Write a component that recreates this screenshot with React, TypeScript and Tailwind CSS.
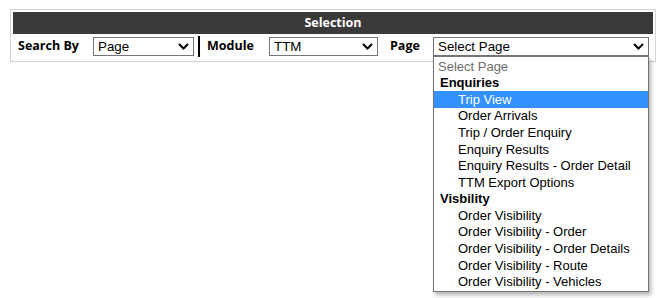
import React from "react";

const Chevron = () => (
  <svg width="11" height="7" viewBox="0 0 11 7" className="shrink-0">
    <path d="M1 1 L5.5 5.5 L10 1" fill="none" stroke="#000" strokeWidth="2" />
  </svg>
);

const Select = ({ value, width }: { value: string; width: string }) => (
  <div
    className={`${width} h-[19px] border border-[#767676] bg-white flex items-center justify-between pl-[4px] pr-[4px] text-[13.33px] leading-none text-black`}
    style={{ fontFamily: '"Liberation Sans", Arial, sans-serif' }}
  >
    <span>{value}</span>
    <Chevron />
  </div>
);

const groups: { label: string; items: string[] }[] = [
  {
    label: "Enquiries",
    items: [
      "Trip View",
      "Order Arrivals",
      "Trip / Order Enquiry",
      "Enquiry Results",
      "Enquiry Results - Order Detail",
      "TTM Export Options",
    ],
  },
  {
    label: "Visbility",
    items: [
      "Order Visibility",
      "Order Visibility - Order",
      "Order Visibility - Order Details",
      "Order Visibility - Route",
      "Order Visibility - Vehicles",
    ],
  },
];

export default function App() {
  const label = "font-bold text-[12.5px] text-black";
  return (
    <div className="w-[661px] h-[298px] bg-white" style={{ fontFamily: '"Open Sans", "Noto Sans", sans-serif' }}>
      <div className="ml-[10px] pt-[9px]">
        <div className="w-[646px] border border-[#d4d4d4] p-[2px]">
          <div className="h-[22px] bg-[#3a3a3a] flex items-center justify-center text-white font-bold text-[12.5px]">
            Selection
          </div>
          <div className="h-[25px] flex items-center pl-[5px]">
            <span className={`${label} w-[75px]`}>Search By</span>
            <Select value="Page" width="w-[101px]" />
            <div className="w-[2px] h-[21px] bg-black ml-[4px] mr-[7px]" />
            <span className={`${label} w-[62px]`}>Module</span>
            <Select value="TTM" width="w-[109px]" />
            <span className={`${label} ml-[12px] w-[43px]`}>Page</span>
            <div className="relative">
              <Select value="Select Page" width="w-[216px]" />
              <div
                className="absolute left-0 top-[19px] w-[216px] border border-[#767676] bg-white shadow-[2px_3px_4px_rgba(0,0,0,0.3)] py-[1px] z-10 text-[13px] text-black"
                style={{ fontFamily: '"Liberation Sans", Arial, sans-serif' }}
              >
                <div className="h-[16.6px] flex items-center pl-[4px] text-[#6d6d6d]">Select Page</div>
                {groups.map((g) => (
                  <div key={g.label}>
                    <div className="h-[16.6px] flex items-center pl-[6px] font-bold">{g.label}</div>
                    {g.items.map((it) => (
                      <div
                        key={it}
                        className={`h-[16.6px] flex items-center pl-[24px] ${
                          it === "Trip View" ? "bg-[#3392ff] text-white" : ""
                        }`}
                      >
                        {it}
                      </div>
                    ))}
                  </div>
                ))}
              </div>
            </div>
          </div>
        </div>
      </div>
    </div>
  );
}
